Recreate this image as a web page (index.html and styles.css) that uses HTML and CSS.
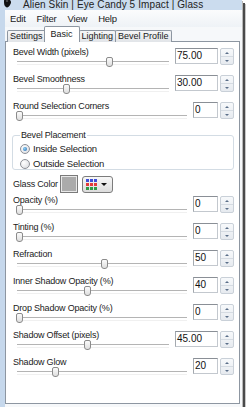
FILE: index.html
```html
<!DOCTYPE html>
<html lang="en">

<head>
    <meta charset="UTF-8">
    <title>Alien Skin | Eye Candy 5 Impact | Glass</title>
    <link rel="stylesheet" href="styles.css">
</head>

<body>
    <div class="window">
        <div class="titlebar">
            <svg class="app-icon" width="9" height="9" viewBox="0 0 9 9">
                <path d="M1 2 C1 0 3 -1 5 0 C8 1 9 3 7 6 C6 8 4 9 3 8 C1 7 1 4 1 2 Z" fill="#111"/>
                <ellipse cx="4" cy="2" rx="1.2" ry="0.8" fill="#666"/>
            </svg>
            <span class="title">Alien Skin | Eye Candy 5 Impact | Glass</span>
        </div>

        <div class="menubar">
            <span class="menu-item">Edit</span>
            <span class="menu-item">Filter</span>
            <span class="menu-item">View</span>
            <span class="menu-item">Help</span>
        </div>

        <div class="tabs">
            <div class="tab">Settings</div>
            <div class="tab active">Basic</div>
            <div class="tab">Lighting</div>
            <div class="tab">Bevel Profile</div>
        </div>

        <div class="panel">
            <div class="field">
                <div class="field-main">
                    <div class="field-label">Bevel Width (pixels)</div>
                    <div class="slider"><span class="thumb" style="left: 59%"></span></div>
                </div>
                <div class="spin-box">
                    <div class="spin-input wide">75.00</div>
                    <div class="spin-buttons"><span class="up"></span><span class="down"></span></div>
                </div>
            </div>

            <div class="field">
                <div class="field-main">
                    <div class="field-label">Bevel Smoothness</div>
                    <div class="slider"><span class="thumb" style="left: 31%"></span></div>
                </div>
                <div class="spin-box">
                    <div class="spin-input wide">30.00</div>
                    <div class="spin-buttons"><span class="up"></span><span class="down"></span></div>
                </div>
            </div>

            <div class="field">
                <div class="field-main">
                    <div class="field-label">Round Selection Corners</div>
                    <div class="slider"><span class="thumb" style="left: 0%"></span></div>
                </div>
                <div class="spin-box">
                    <div class="spin-input">0</div>
                    <div class="spin-buttons"><span class="up"></span><span class="down"></span></div>
                </div>
            </div>

            <fieldset class="group">
                <legend>Bevel Placement</legend>
                <label class="radio-row"><span class="radio checked"></span>Inside Selection</label>
                <label class="radio-row"><span class="radio"></span>Outside Selection</label>
            </fieldset>

            <div class="color-row">
                <span class="color-label">Glass Color</span>
                <span class="swatch"></span>
                <span class="palette-button">
                    <span class="palette-grid">
                        <i class="c-blue"></i><i class="c-blue"></i><i class="c-blue"></i>
                        <i class="c-red"></i><i class="c-red"></i><i class="c-red"></i>
                        <i class="c-green"></i><i class="c-green"></i><i class="c-green"></i>
                    </span>
                    <span class="drop-arrow"></span>
                </span>
            </div>

            <div class="field">
                <div class="field-main">
                    <div class="field-label">Opacity (%)</div>
                    <div class="slider"><span class="thumb" style="left: 0%"></span></div>
                </div>
                <div class="spin-box">
                    <div class="spin-input">0</div>
                    <div class="spin-buttons"><span class="up"></span><span class="down"></span></div>
                </div>
            </div>

            <div class="field">
                <div class="field-main">
                    <div class="field-label">Tinting (%)</div>
                    <div class="slider"><span class="thumb" style="left: 0%"></span></div>
                </div>
                <div class="spin-box">
                    <div class="spin-input">0</div>
                    <div class="spin-buttons"><span class="up"></span><span class="down"></span></div>
                </div>
            </div>

            <div class="field">
                <div class="field-main">
                    <div class="field-label">Refraction</div>
                    <div class="slider"><span class="thumb" style="left: 50%"></span></div>
                </div>
                <div class="spin-box">
                    <div class="spin-input">50</div>
                    <div class="spin-buttons"><span class="up"></span><span class="down"></span></div>
                </div>
            </div>

            <div class="field">
                <div class="field-main">
                    <div class="field-label">Inner Shadow Opacity (%)</div>
                    <div class="slider"><span class="thumb" style="left: 40%"></span></div>
                </div>
                <div class="spin-box">
                    <div class="spin-input">40</div>
                    <div class="spin-buttons"><span class="up"></span><span class="down"></span></div>
                </div>
            </div>

            <div class="field">
                <div class="field-main">
                    <div class="field-label">Drop Shadow Opacity (%)</div>
                    <div class="slider"><span class="thumb" style="left: 0%"></span></div>
                </div>
                <div class="spin-box">
                    <div class="spin-input">0</div>
                    <div class="spin-buttons"><span class="up"></span><span class="down"></span></div>
                </div>
            </div>

            <div class="field">
                <div class="field-main">
                    <div class="field-label">Shadow Offset (pixels)</div>
                    <div class="slider"><span class="thumb" style="left: 45%"></span></div>
                </div>
                <div class="spin-box">
                    <div class="spin-input wide">45.00</div>
                    <div class="spin-buttons"><span class="up"></span><span class="down"></span></div>
                </div>
            </div>

            <div class="field">
                <div class="field-main">
                    <div class="field-label">Shadow Glow</div>
                    <div class="slider"><span class="thumb" style="left: 21%"></span></div>
                </div>
                <div class="spin-box">
                    <div class="spin-input">20</div>
                    <div class="spin-buttons"><span class="up"></span><span class="down"></span></div>
                </div>
            </div>
        </div>
    </div>
</body>

</html>
```

FILE: styles.css
```css
body {
    margin: 0;
    background-color: white;
    font-family: 'Liberation Sans', Arial, sans-serif;
    font-size: 9px;
    letter-spacing: -0.2px;
    color: #1a1a1a;
}

.window {
    width: 237px;
    height: 407px;
    border-left: 5px solid #c6d8ec;
    background-color: #f6f8fa;
    box-shadow: 1px 1px 0 #b8b8b8, 3px 3px 0 #4a4a4a, 4px 4px 0 #c8c8c8;
    display: flex;
    flex-direction: column;
}

.titlebar {
    height: 10px;
    margin-left: -5px;
    padding-left: 3px;
    background-color: #cbdcee;
    display: flex;
    align-items: flex-start;
}

.app-icon {
    margin-top: -1px;
}

.title {
    margin-left: 11px;
    font-size: 10px;
    line-height: 10px;
    letter-spacing: 0.1px;
    color: #222;
}

.menubar {
    height: 17px;
    display: flex;
    align-items: center;
    gap: 11px;
    padding-left: 5px;
    background: linear-gradient(#fbfcfd, #eef2f6);
    font-size: 9.5px;
}

.tabs {
    display: flex;
    align-items: flex-end;
    height: 15px;
    padding-left: 2px;
    margin-bottom: -1px;
    position: relative;
    z-index: 1;
    letter-spacing: 0;
}

.tab {
    height: 11px;
    line-height: 11px;
    padding: 0 2px;
    border: 1px solid #8d96a1;
    border-bottom: none;
    border-radius: 2px 2px 0 0;
    background: linear-gradient(#f6f6f6, #e1e4e8);
    margin-right: -1px;
}

.tab.active {
    height: 15px;
    line-height: 14px;
    padding: 0 6px;
    background: white;
    margin: 0 -1px 0 -1px;
    position: relative;
    z-index: 2;
}

.panel {
    flex: 1;
    margin-right: 2px;
    margin-bottom: 3px;
    background-color: white;
    border: 1px solid #8d96a1;
    padding: 5px 5px 0 7px;
}

.field {
    display: flex;
    align-items: flex-start;
    gap: 6px;
    height: 27px;
}

.field-main {
    flex: 1;
}

.field-label {
    height: 11px;
    line-height: 11px;
}

.slider {
    position: relative;
    height: 2px;
    margin: 3px 0 0 4px;
    border-top: 1px solid #b4b4b4;
    border-bottom: 1px solid #f0f0f0;
}

.thumb {
    position: absolute;
    top: -5px;
    width: 5px;
    height: 8px;
    margin-left: -1px;
    border: 1px solid #8b8b8b;
    border-radius: 2px 2px 3px 3px;
    background: linear-gradient(#fbfbfb, #dedede);
}

.spin-box {
    display: flex;
    gap: 2px;
    margin-top: 1px;
}

.spin-input {
    width: 22px;
    height: 14px;
    line-height: 14px;
    padding-left: 1px;
    border: 1px solid #c3c8ce;
    border-top-color: #8a8f96;
    border-left-color: #a4a9af;
    font-size: 10px;
    letter-spacing: 0;
    color: #111;
    background: white;
}

.spin-input.wide {
    width: 40px;
}

.spin-buttons {
    width: 12px;
    height: 15px;
    display: flex;
    flex-direction: column;
    border: 1px solid #c9d0d8;
    border-radius: 2px;
    background: linear-gradient(#f7f9fb, #e6eaef);
}

.spin-buttons span {
    flex: 1;
    display: flex;
    align-items: center;
    justify-content: center;
}

.spin-buttons .up {
    border-bottom: 1px solid #d5dbe2;
}

.spin-buttons .up::after {
    content: '';
    border: 2px solid transparent;
    border-bottom: 2px solid #5b6f89;
    border-top: none;
}

.spin-buttons .down::after {
    content: '';
    border: 2px solid transparent;
    border-top: 2px solid #5b6f89;
    border-bottom: none;
}

.group {
    margin: 3px 0 0 -1px;
    padding: 3px 0 4px 7px;
    height: 30px;
    border: 1px solid #d3dce4;
    border-radius: 3px;
    display: flex;
    flex-direction: column;
    gap: 4px;
}

.group legend {
    padding: 0 1px;
    margin-left: 0;
    line-height: 9px;
}

.radio-row {
    display: flex;
    align-items: center;
    gap: 3px;
    height: 11px;
    font-size: 9.5px;
}

.radio {
    width: 8px;
    height: 8px;
    border: 1px solid #8d9097;
    border-radius: 50%;
    background: radial-gradient(circle at 35% 35%, #ffffff, #d6d8dc);
    display: flex;
    align-items: center;
    justify-content: center;
}

.radio.checked::after {
    content: '';
    width: 4px;
    height: 4px;
    border-radius: 50%;
    background: radial-gradient(circle at 40% 40%, #8fd2f7, #1f5fa8);
}

.color-row {
    display: flex;
    align-items: center;
    height: 20px;
    margin: 4px 0 1px;
}

.color-label {
    width: 47px;
}

.swatch {
    width: 16px;
    height: 16px;
    border: 1px solid #7a7a7a;
    box-shadow: inset 0 0 0 1px #e8e8e8;
    background-color: #ababab;
}

.palette-button {
    margin-left: 4px;
    width: 31px;
    height: 17px;
    box-sizing: border-box;
    border: 1px solid #7c7c7c;
    border-radius: 3px;
    background: linear-gradient(#f8f8f8, #dcdcdc);
    display: flex;
    align-items: center;
    gap: 4px;
    padding-left: 3px;
}

.palette-grid {
    display: grid;
    grid-template-columns: repeat(3, 3px);
    grid-auto-rows: 3px;
    gap: 1px;
}

.palette-grid i {
    display: block;
}

.c-blue {
    background-color: #3f4fd6;
}

.c-red {
    background-color: #e23a3a;
}

.c-green {
    background-color: #2f9b45;
}

.drop-arrow {
    border: 3px solid transparent;
    border-top: 3px solid #111;
    border-bottom: none;
}
```
